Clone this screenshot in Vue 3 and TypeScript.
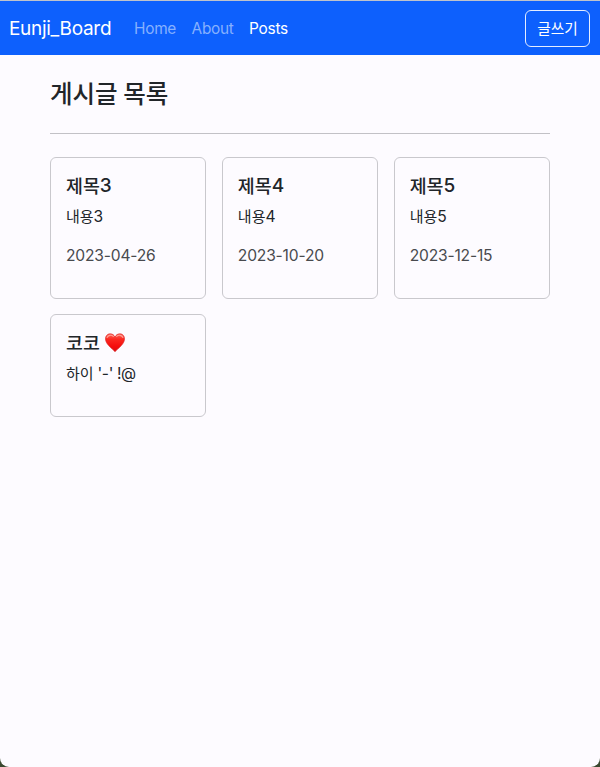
<script setup lang="ts">
interface Post {
  id: number
  title: string
  titleSuffix?: string
  heart?: boolean
  content: string
  contentSuffix: string
  createdAt?: string
}

const links: { label: string; active: boolean }[] = [
  { label: 'Home', active: false },
  { label: 'About', active: false },
  { label: 'Posts', active: true },
]

const posts: Post[] = [
  { id: 3, title: '제목', titleSuffix: '3', content: '내용', contentSuffix: '3', createdAt: '2023-04-26' },
  { id: 4, title: '제목', titleSuffix: '4', content: '내용', contentSuffix: '4', createdAt: '2023-10-20' },
  { id: 5, title: '제목', titleSuffix: '5', content: '내용', contentSuffix: '5', createdAt: '2023-12-15' },
  { id: 6, title: '코코', heart: true, content: '하이', contentSuffix: " '-' !@" },
]
</script>

<template>
  <div class="window">
    <header class="navbar">
      <a class="brand">Eunji_Board</a>
      <nav class="links">
        <a v-for="link in links" :key="link.label" class="link" :class="{ active: link.active }">{{ link.label }}</a>
      </nav>
      <button class="write" type="button">글쓰기</button>
    </header>
    <main class="container">
      <h2 class="heading">게시글 목록</h2>
      <hr class="rule" />
      <div class="grid">
        <article v-for="post in posts" :key="post.id" class="card">
          <h5 class="title">
            <span class="ko">{{ post.title }}</span><span>{{ post.titleSuffix }}</span>
            <svg v-if="post.heart" class="heart" viewBox="0 0 20 20" role="img" aria-label="heart">
              <defs>
                <linearGradient id="heart-fill" x1="0" y1="0" x2="0" y2="1">
                  <stop offset="0" stop-color="#ff685c" />
                  <stop offset="0.3" stop-color="#fb2820" />
                  <stop offset="0.7" stop-color="#f50d0d" />
                  <stop offset="1" stop-color="#d90d12" />
                </linearGradient>
              </defs>
              <path
                d="M10 18.7C8.8 17.4 6.2 15.4 3.7 12.6C1.5 10.2 .5 8.1 .5 5.8C.5 2.9 2.5 .8 5.2 .8C7.4 .8 9.1 2 10 4.1C10.9 2 12.6 .8 14.8 .8C17.5 .8 19.5 2.9 19.5 5.8C19.5 8.1 18.5 10.2 16.3 12.6C13.8 15.4 11.2 17.4 10 18.7Z"
                fill="url(#heart-fill)"
                stroke="#d81a1b"
                stroke-width=".6"
              />
              <path d="M2.1 4.5C2.9 2.3 6.5 1.3 8.3 3.5M11.7 3.5C13.5 1.3 17.1 2.3 17.9 4.5" fill="none" stroke="#ff9c91" stroke-width="1.1" stroke-linecap="round" />
            </svg>
          </h5>
          <p class="content"><span class="ko">{{ post.content }}</span><span class="tail">{{ post.contentSuffix }}</span></p>
          <p class="date">{{ post.createdAt }}</p>
        </article>
      </div>
    </main>
  </div>
</template>

<style>
body {
  background: #3b4930;
}
</style>

<style scoped>
.window {
  box-sizing: border-box;
  height: 767px;
  border-top: 1px solid #bfc3cb;
  border-radius: 0 0 9px 9px;
  background: #fdfbff;
  color: #212529;
  font-family: Inter, "Noto Sans CJK KR", sans-serif;
  font-size: 15.6px;
  overflow: hidden;
}

.navbar {
  box-sizing: border-box;
  display: flex;
  align-items: center;
  height: 54px;
  padding: 0 10px 0 9px;
  background: #0d60fd;
  color: #fff;
}

.brand {
  width: 125px;
  font-size: 19px;
  letter-spacing: -0.3px;
}

.links {
  display: flex;
  gap: 15.5px;
  flex: 1;
}

.link {
  color: #86b0fe;
  font-size: 15.4px;
  letter-spacing: -0.27px;
}

.link.active {
  color: #fff;
}

.write {
  box-sizing: border-box;
  width: 65px;
  height: 37px;
  padding: 0 0 2px;
  border: 1px solid #e4edff;
  border-radius: 6px;
  background: transparent;
  color: #fff;
  font: 14.7px "Noto Sans CJK KR", sans-serif;
}

.container {
  padding: 22px 50px 0;
}

.heading {
  margin: 0;
  height: 32px;
  font: 500 24.5px/32px "Noto Sans CJK KR", sans-serif;
}

.rule {
  height: 1px;
  margin: 24px 0 23px;
  border: 0;
  background: #c2c1c6;
}

.grid {
  display: grid;
  grid-template-columns: repeat(3, 1fr);
  grid-template-rows: 141.5px 102.5px;
  gap: 15.5px;
}

.card {
  padding: 15px;
  border: 1px solid #c9c8cd;
  border-radius: 6px;
}

.title {
  display: flex;
  align-items: center;
  height: 25px;
  margin: 0 0 7px;
  font-size: 19px;
  line-height: 25px;
  font-weight: 500;
}

.title .ko {
  font-family: "Noto Sans CJK KR", sans-serif;
  font-size: 18.4px;
}

.heart {
  width: 20px;
  height: 20px;
  margin-left: 5px;
}

.content {
  height: 24px;
  margin: 0 0 15px;
  line-height: 24px;
  white-space: pre;
}

.content .ko {
  font-size: 15px;
}

.content .tail {
  letter-spacing: -0.4px;
}

.date {
  margin: 0;
  line-height: 24px;
  letter-spacing: -0.18px;
  color: #484a4e;
}
</style>
